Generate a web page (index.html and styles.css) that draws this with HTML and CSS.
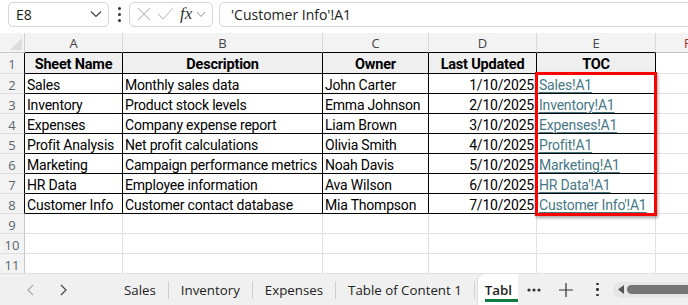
FILE: index.html
```html
<!DOCTYPE html>
<html lang="en">
<head>
  <meta charset="UTF-8" />
  <title>Table of Content - Workbook</title>
  <link rel="stylesheet" href="styles.css">
</head>
<body>

  <div class="formula-bar">
    <div class="name-box">
      <span>E8</span>
      <svg class="chev" width="12" height="8" viewBox="0 0 12 8"><path d="M1 1.5 L6 6.5 L11 1.5" fill="none" stroke="#444" stroke-width="1.2"/></svg>
    </div>
    <div class="kebab"><i></i><i></i><i></i></div>
    <div class="fx-box">
      <svg width="16" height="16" viewBox="0 0 16 16"><path d="M2 2 L14 14 M14 2 L2 14" stroke="#c4c4c4" stroke-width="1.1"/></svg>
      <svg width="18" height="16" viewBox="0 0 18 16"><path d="M2 8 L7 13 L17 2" fill="none" stroke="#c4c4c4" stroke-width="1.1"/></svg>
      <span class="fx">fx</span>
      <svg class="chev" width="10" height="7" viewBox="0 0 10 7"><path d="M1 1 L5 5.5 L9 1" fill="none" stroke="#999" stroke-width="1"/></svg>
    </div>
    <div class="formula-input">'Customer Info'!A1</div>
  </div>

  <div class="sheet" id="sheet">
    <div class="corner"><span class="dot"></span></div>
    <div class="col-head">A</div>
    <div class="col-head">B</div>
    <div class="col-head">C</div>
    <div class="col-head">D</div>
    <div class="col-head">E</div>
    <div class="col-head last">F</div>
    <div class="highlight"></div>
  </div>

  <div class="tab-bar">
    <div class="nav-arrows">
      <svg width="10" height="14" viewBox="0 0 10 14"><path d="M7 2 L2 7 L7 12" fill="none" stroke="#aaa" stroke-width="1.2"/></svg>
      <svg width="10" height="14" viewBox="0 0 10 14"><path d="M3 2 L8 7 L3 12" fill="none" stroke="#444" stroke-width="1.2"/></svg>
    </div>
    <div class="tabs">
      <span class="tab">Sales</span>
      <span class="tab">Inventory</span>
      <span class="tab">Expenses</span>
      <span class="tab">Table of Content 1</span>
      <span class="tab active"><span class="tab-label">Tabl</span></span>
    </div>
    <div class="tab-tools">
      <svg width="14" height="4" viewBox="0 0 14 4"><circle cx="2" cy="2" r="1.6" fill="#333"/><circle cx="7" cy="2" r="1.6" fill="#333"/><circle cx="12" cy="2" r="1.6" fill="#333"/></svg>
      <svg class="plus" width="14" height="14" viewBox="0 0 14 14"><path d="M7 0 V14 M0 7 H14" stroke="#333" stroke-width="1.2"/></svg>
      <div class="kebab small"><i></i><i></i><i></i></div>
      <div class="hscroll">
        <svg width="6" height="9" viewBox="0 0 6 9"><path d="M6 0 L0 4.5 L6 9 Z" fill="#555"/></svg>
        <div class="thumb"></div>
      </div>
    </div>
  </div>

  <script>
    const rows = [
      ['Sales', 'Monthly sales data', 'John Carter', '1/10/2025', 'Sales!A1'],
      ['Inventory', 'Product stock levels', 'Emma Johnson', '2/10/2025', 'Inventory!A1'],
      ['Expenses', 'Company expense report', 'Liam Brown', '3/10/2025', 'Expenses!A1'],
      ['Profit Analysis', 'Net profit calculations', 'Olivia Smith', '4/10/2025', 'Profit!A1'],
      ['Marketing', 'Campaign performance metrics', 'Noah Davis', '5/10/2025', 'Marketing!A1'],
      ['HR Data', 'Employee information', 'Ava Wilson', '6/10/2025', "HR Data'!A1"],
      ['Customer Info', 'Customer contact database', 'Mia Thompson', '7/10/2025', "Customer Info'!A1"]
    ];
    const sheet = document.getElementById('sheet');
    let html = '';

    // header row of the table
    html += `<div class="row-head in-table">1</div>`;
    ['Sheet Name', 'Description', 'Owner', 'Last Updated', 'TOC'].forEach(h => {
      html += `<div class="cell th">${h}</div>`;
    });
    html += `<div class="cell empty"></div>`;

    rows.forEach((r, i) => {
      html += `<div class="row-head in-table">${i + 2}</div>`;
      html += `<div class="cell td">${r[0]}</div>`;
      html += `<div class="cell td">${r[1]}</div>`;
      html += `<div class="cell td">${r[2]}</div>`;
      html += `<div class="cell td num">${r[3]}</div>`;
      html += `<div class="cell td"><a class="link" href="#">${r[4]}</a></div>`;
      html += `<div class="cell empty"></div>`;
    });

    for (let n = 9; n <= 11; n++) {
      html += `<div class="row-head">${n}</div>`;
      for (let c = 0; c < 6; c++) html += `<div class="cell empty"></div>`;
    }
    sheet.insertAdjacentHTML('beforeend', html);
  </script>

</body>
</html>
```

FILE: styles.css
```css
* {
  box-sizing: border-box;
}
body {
  margin: 0;
  width: 688px;
  height: 305px;
  overflow: hidden;
  background: #fff;
  font-family: 'Segoe UI', 'Open Sans', 'Liberation Sans', sans-serif;
  color: #222;
}

/* formula bar */
.formula-bar {
  display: flex;
  align-items: center;
  height: 28px;
  padding-left: 8px;
  white-space: nowrap;
  overflow: hidden;
}
.name-box {
  display: flex;
  align-items: center;
  justify-content: space-between;
  flex-shrink: 0;
  width: 101px;
  height: 25px;
  border: 1px solid #d6d6d6;
  border-radius: 5px;
  padding: 0 6px 0 7px;
  font-size: 14px;
  color: #222;
}
.kebab {
  display: flex;
  flex-direction: column;
  gap: 3px;
  margin: 0 8px 0 9px;
}
.kebab i {
  display: block;
  width: 3px;
  height: 3px;
  border-radius: 50%;
  background: #333;
}
.fx-box {
  display: flex;
  align-items: center;
  gap: 4px;
  flex-shrink: 0;
  width: 84px;
  height: 25px;
  border: 1px solid #d6d6d6;
  border-radius: 5px;
  padding: 0 4px 0 6px;
}
.fx {
  font-family: 'Liberation Serif', serif;
  font-style: italic;
  font-size: 17px;
  color: #333;
  margin-left: 2px;
}
.formula-input {
  flex: 1 0 480px;
  height: 25px;
  margin-left: 6px;
  border: 1px solid #d6d6d6;
  border-radius: 5px;
  padding: 2px 0 0 11px;
  font-size: 14px;
  color: #222;
}

/* grid */
.sheet {
  position: relative;
  display: grid;
  grid-template-columns: 25px 98px 200px 106px 108px 119px 1fr;
  grid-template-rows: 20px 21px repeat(10, 20px);
  margin-top: 5px;
  overflow: hidden;
  font-family: 'Roboto', 'Liberation Sans', sans-serif;
  font-size: 14px;
  letter-spacing: -0.2px;
  color: #000;
}
.corner {
  position: relative;
  background: #f3f3f3;
  border-right: 1px solid #d0d0d0;
  border-bottom: 1px solid #c8c8c8;
}
.corner::after {
  content: '';
  position: absolute;
  right: 2px;
  bottom: 2px;
  border-style: solid;
  border-width: 0 0 12px 12px;
  border-color: transparent transparent #dcdcdc transparent;
}
.dot {
  position: absolute;
  left: 24px;
  top: -3px;
  width: 1px;
  height: 2px;
  background: #555;
}
.col-head {
  background: #f3f3f3;
  border-right: 1px solid #d8d8d8;
  border-bottom: 1px solid #000;
  text-align: center;
  font-family: 'Segoe UI', 'Open Sans', sans-serif;
  font-size: 13px;
  letter-spacing: 0;
  line-height: 19px;
  padding-top: 1px;
  color: #444;
}
.col-head.last {
  border-bottom-color: #c8c8c8;
  color: #b03030;
  text-align: left;
  padding-left: 28px;
}
.row-head {
  background: #f3f3f3;
  border-right: 1px solid #c8c8c8;
  border-bottom: 1px solid #dedede;
  text-align: center;
  font-family: 'Segoe UI', 'Open Sans', sans-serif;
  font-size: 13px;
  letter-spacing: 0;
  line-height: 18px;
  padding-top: 2px;
  color: #5a6470;
}
.row-head.in-table {
  border-right-color: #000;
}
.cell {
  border-right: 1px solid #e1e1e1;
  border-bottom: 1px solid #e1e1e1;
  padding: 2px 2px 0;
  line-height: 18px;
  white-space: nowrap;
  overflow: hidden;
}
.cell.th {
  background: #efefef;
  border-right-color: #000;
  border-bottom-color: #000;
  font-weight: bold;
  text-align: center;
  font-size: 14.5px;
  line-height: 19px;
}
.cell.td {
  border-right-color: #000;
  border-bottom-color: #000;
}
.cell.num {
  text-align: right;
}
.link {
  color: #467886;
  text-decoration: underline;
  text-underline-offset: 2px;
}
.highlight {
  position: absolute;
  left: 535px;
  top: 39px;
  width: 122px;
  height: 144px;
  border: 3px solid #f00;
  box-shadow: 1px 2px 3px rgba(0,0,0,0.35);
  pointer-events: none;
}

/* sheet tabs */
.tab-bar {
  display: flex;
  align-items: stretch;
  height: 31px;
  background: #f0f0f0;
  font-family: 'Segoe UI', 'Open Sans', sans-serif;
  font-size: 13.3px;
  color: #222;
}
.nav-arrows {
  display: flex;
  align-items: center;
  gap: 22px;
  padding-left: 26px;
  width: 112px;
}
.tabs {
  display: flex;
  align-items: center;
  width: 406px;
  overflow: hidden;
}
.tab {
  padding: 0 12px 0 12px;
  border-right: 1px solid #cfcfcf;
  line-height: 18px;
  white-space: nowrap;
}
.tab.active {
  align-self: stretch;
  display: flex;
  align-items: center;
  width: 40px;
  background: #fff;
  border: none;
  border-radius: 6px 0 0 0;
  box-shadow: 0 0 2px rgba(0,0,0,0.25);
  margin-left: 3px;
  padding: 0 0 0 7px;
  overflow: hidden;
}
.tab-label {
  font-weight: 600;
  border-bottom: 3px solid #107c41;
  padding-top: 4px;
  padding-right: 6px;
  line-height: 18px;
}
.tab-tools {
  flex: 1;
  display: flex;
  align-items: center;
  padding-left: 9px;
  background: #f0f0f0;
  position: relative;
  z-index: 1;
}
.plus {
  margin-left: 18px;
}
.kebab.small {
  margin: 0 14px 0 23px;
}
.kebab.small i {
  width: 2.5px;
  height: 2.5px;
}
.hscroll {
  flex: 1;
  display: flex;
  align-items: center;
  gap: 3px;
  height: 16px;
  margin-right: -6px;
  padding-left: 5px;
  background: #e6e6e6;
  border-radius: 8px 0 0 8px;
}
.thumb {
  flex: 1;
  height: 9px;
  background: #757575;
  border-radius: 5px 0 0 5px;
}
```
